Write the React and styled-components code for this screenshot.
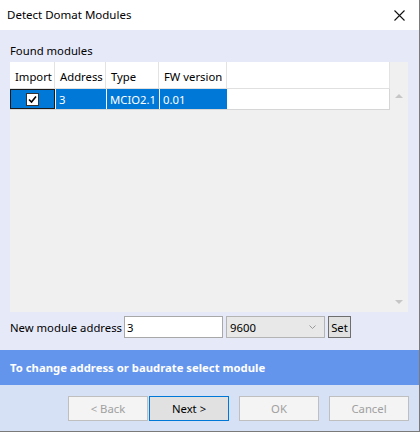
import React from "react";
import styled, { createGlobalStyle } from "styled-components";

const GlobalStyle = createGlobalStyle`
  html, body {
    margin: 0;
    padding: 0;
    background: #ffffff;
  }
  body {
    font-family: "Noto Sans", "Liberation Sans", sans-serif;
    font-size: 11.3px;
    color: #000;
  }
`;

const columns = [
  { key: "import", title: "Import", width: 44 },
  { key: "address", title: "Address", width: 50 },
  { key: "type", title: "Type", width: 52 },
  { key: "fw", title: "FW version", width: 67 },
];

const rows = [{ import: true, address: "3", type: "MCIO2.1", fw: "0.01" }];

export default function App() {
  return (
    <>
      <GlobalStyle />
      <Window>
        <TitleBar>
          <Title>Detect Domat Modules</Title>
          <CloseButton>
            <svg width="11" height="11" viewBox="0 0 11 11">
              <path d="M0.5 0.5 L10.5 10.5 M10.5 0.5 L0.5 10.5" stroke="#111" strokeWidth="1.1" />
            </svg>
          </CloseButton>
        </TitleBar>

        <Body>
          <Label>Found modules</Label>
          <Grid>
            <Table>
              <HeaderRow>
                {columns.map((c) => (
                  <HeaderCell key={c.key} $w={c.width}>
                    {c.title}
                  </HeaderCell>
                ))}
                <HeaderFill />
              </HeaderRow>
              {rows.map((r, i) => (
                <DataRow key={i}>
                  <FocusCell $w={columns[0].width}>
                    <CheckBox>
                      {r.import && (
                        <svg width="11" height="11" viewBox="0 0 11 11">
                          <path d="M2 5.5 L4.5 8 L9 2.5" fill="none" stroke="#000" strokeWidth="1.6" />
                        </svg>
                      )}
                    </CheckBox>
                  </FocusCell>
                  <DataCell $w={columns[1].width}>{r.address}</DataCell>
                  <DataCell $w={columns[2].width}>{r.type}</DataCell>
                  <DataCell $w={columns[3].width}>{r.fw}</DataCell>
                  <RowFill />
                </DataRow>
              ))}
            </Table>
            <ScrollBar>
              <Arrow $up />
              <Arrow />
            </ScrollBar>
          </Grid>

          <AddressRow>
            <AddressLabel>New module address</AddressLabel>
            <TextBox>3</TextBox>
            <Combo>
              <span>9600</span>
              <svg width="7" height="4" viewBox="0 0 7 4">
                <path d="M0.5 0.5 L3.5 3.5 L6.5 0.5" fill="none" stroke="#9a9a9a" strokeWidth="1" />
              </svg>
            </Combo>
            <SetButton>Set</SetButton>
          </AddressRow>
        </Body>

        <Banner>To change address or baudrate select module</Banner>

        <Footer>
          <ButtonPair>
            <WizardButton disabled>&lt; Back</WizardButton>
            <WizardButton $focused>Next &gt;</WizardButton>
          </ButtonPair>
          <WizardButton disabled>OK</WizardButton>
          <WizardButton disabled>Cancel</WizardButton>
        </Footer>
      </Window>
    </>
  );
}

const Window = styled.div`
  width: 420px;
  height: 432px;
  box-sizing: border-box;
  border-right: 1px solid #7a7a7a;
  border-bottom: 1px solid #7a7a7a;
  display: flex;
  flex-direction: column;
  overflow: hidden;
`;

const TitleBar = styled.div`
  height: 30px;
  flex: none;
  background: #ffffff;
  display: flex;
  align-items: center;
  justify-content: space-between;
  padding-left: 7px;
`;

const Title = styled.span`
  font-size: 11.5px;
  padding-bottom: 1px;
`;

const CloseButton = styled.div`
  width: 46px;
  height: 30px;
  display: flex;
  align-items: center;
  justify-content: center;
  margin-right: -3px;
`;

const Body = styled.div`
  flex: none;
  height: 320px;
  background: #e6e9f8;
  padding: 13px 10px 0 10px;
  box-sizing: border-box;
`;

const Label = styled.div`
  height: 19px;
  line-height: 15px;
`;

const Grid = styled.div`
  width: 398px;
  height: 250px;
  background: #f0f0f0;
  display: flex;
`;

const Table = styled.div`
  width: 380px;
  display: flex;
  flex-direction: column;
`;

const HeaderRow = styled.div`
  display: flex;
  height: 26px;
  background: #ffffff;
  border-bottom: 1px solid #e0e0e0;
`;

const HeaderCell = styled.div`
  width: ${(p) => p.$w - 5}px;
  flex: none;
  border-right: 1px solid #e3e3e3;
  padding: 2px 0 0 5px;
  display: flex;
  align-items: center;
`;

const HeaderFill = styled.div`
  flex: 1;
  border-right: 1px solid #e3e3e3;
`;

const DataRow = styled.div`
  display: flex;
  height: 20px;
  border-bottom: 1px solid #d6d6d6;
`;

const FocusCell = styled.div`
  width: ${(p) => p.$w - 1}px;
  flex: none;
  background: #0078d7;
  border: 1px solid #1a1a1a;
  margin-right: 1px;
  display: flex;
  align-items: center;
  justify-content: center;
`;

const DataCell = styled.div`
  width: ${(p) => p.$w - 3}px;
  flex: none;
  background: #0078d7;
  color: #ffffff;
  padding-left: 3px;
  border-right: 1px solid #ffffff;
  display: flex;
  align-items: center;
`;

const RowFill = styled.div`
  flex: 1;
  background: #ffffff;
  border-right: 1px solid #d6d6d6;
`;

const CheckBox = styled.div`
  width: 11px;
  height: 11px;
  background: #ffffff;
  border: 1px solid #333333;
  display: flex;
  align-items: center;
  justify-content: center;
`;

const ScrollBar = styled.div`
  flex: 1;
  display: flex;
  flex-direction: column;
  justify-content: space-between;
  align-items: center;
  padding: 32px 0 8px 0;
`;

const Arrow = styled.div`
  width: 0;
  height: 0;
  border-left: 4px solid transparent;
  border-right: 4px solid transparent;
  ${(p) =>
    p.$up
      ? "border-bottom: 4px solid #c6c6c6;"
      : "border-top: 4px solid #c6c6c6;"}
`;

const AddressRow = styled.div`
  display: flex;
  align-items: center;
  height: 22px;
  margin-top: 4px;
`;

const AddressLabel = styled.span`
  width: 114px;
  flex: none;
`;

const TextBox = styled.div`
  width: 95px;
  height: 20px;
  background: #ffffff;
  border: 1px solid #a8a8a8;
  padding-left: 2px;
  display: flex;
  align-items: center;
  margin-right: 3px;
`;

const Combo = styled.div`
  width: 86px;
  height: 20px;
  background: #e8e8e8;
  border: 1px solid #b4b4b4;
  padding: 0 8px 0 3px;
  display: flex;
  align-items: center;
  justify-content: space-between;
  margin-right: 3px;
`;

const SetButton = styled.div`
  width: 21px;
  height: 20px;
  background: #e1e1e1;
  border: 1px solid #6e6e6e;
  display: flex;
  align-items: center;
  justify-content: center;
`;

const Banner = styled.div`
  height: 35px;
  flex: none;
  background: #6495ed;
  color: #ffffff;
  font-weight: bold;
  display: flex;
  align-items: center;
  padding-left: 10px;
`;

const Footer = styled.div`
  flex: 1;
  background: #d7e1f5;
  display: flex;
  justify-content: flex-end;
  align-items: flex-start;
  gap: 10px;
  padding: 11px 10px 0 0;
`;

const ButtonPair = styled.div`
  display: flex;
  gap: 1px;
`;

const WizardButton = styled.div`
  width: 78px;
  height: 23px;
  border: 1px solid ${(p) => (p.$focused ? "#0078d7" : p.disabled ? "#bfbfbf" : "#adadad")};
  background: ${(p) => (p.$focused ? "#e1e1e1" : "#f4f4f4")};
  color: ${(p) => (p.disabled ? "#a0a0a0" : "#000000")};
  display: flex;
  align-items: center;
  justify-content: center;
`;
